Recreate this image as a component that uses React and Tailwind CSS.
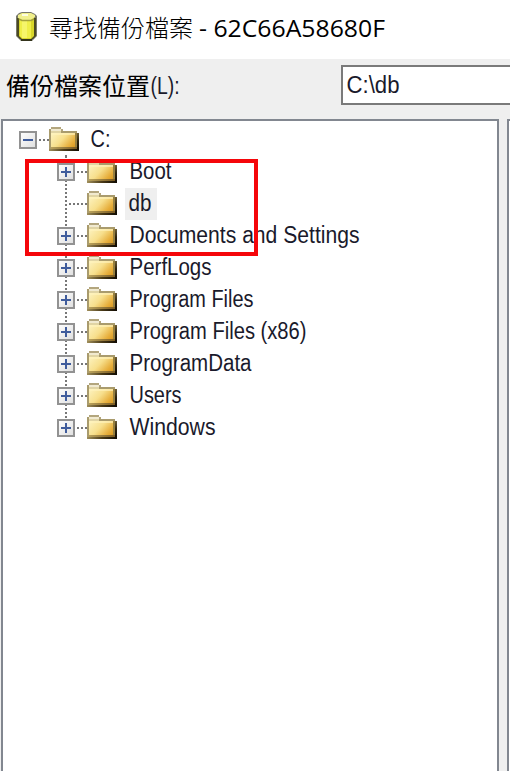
import React from "react";

const folders = [
  { name: "Boot", expandable: true, length: 42 },
  { name: "db", expandable: false, length: 23, selected: true },
  { name: "Documents and Settings", expandable: true, length: 230 },
  { name: "PerfLogs", expandable: true, length: 82 },
  { name: "Program Files", expandable: true, length: 124 },
  { name: "Program Files (x86)", expandable: true, length: 177 },
  { name: "ProgramData", expandable: true, length: 122 },
  { name: "Users", expandable: true, length: 52 },
  { name: "Windows", expandable: true, length: 86 },
];

function Label({ children, length }) {
  return (
    <svg width={length + 4} height="32" className="block shrink-0 overflow-visible">
      <text
        x="0.5"
        y="23"
        textLength={length}
        lengthAdjust="spacingAndGlyphs"
        className="fill-[#1a1a2b] font-['Liberation_Sans',Arial,sans-serif] text-[23.5px]"
      >
        {children}
      </text>
    </svg>
  );
}

function Database() {
  return (
    <svg width="24" height="32" viewBox="0 0 24 32" className="block">
      <path d="M5 2 8 1h9l4 2 2 2v20l-2 2-3 3H7l-3-3-2-2V5z" fill="#77776a" />
      <path d="M3 7h19v18l-3 3H6l-3-3z" fill="#4b4a20" />
      <path d="M5 6h15v19l-3 3H8l-3-3z" fill="#d8d62a" />
      <path d="M6 8h11v19H8l-2-2z" fill="#efee48" />
      <path d="M8 10h5v17H8z" fill="#f6f56a" />
      <path d="M4 4 8 2h9l4 2v2l-4 3H8L4 7z" fill="#f1f08c" />
      <path d="M8 3h6v2H8z" fill="#fdfde0" />
      <path d="M5 8l3 1.500h9L20 8" fill="none" stroke="#a5a33c" strokeWidth="1.500" />
      <path d="M7 28h11v2H7z" fill="#34341c" />
    </svg>
  );
}

function Folder() {
  return (
    <svg width="30" height="24" viewBox="0 0 30 24" className="block shrink-0" shapeRendering="crispEdges">
      <path d="M2 0h10v2H2z" fill="#b3a67e" />
      <path d="M0 2h2v20H0z" fill="#a99b6d" />
      <path d="M2 2h10v2H2z" fill="#f1ead0" />
      <path d="M12 2h2v2h-2z" fill="#b3a67e" />
      <path d="M2 4h10v2H2z" fill="#e0d4a4" />
      <path d="M12 4h16v2H12z" fill="#a99b6d" />
      <path d="M2 6h24v14H2z" fill="url(#folderFace)" />
      <path d="M2 6h24v2H2z" fill="#fff3bd" fillOpacity=".65" />
      <path d="M26 6h2v14h-2z" fill="#97803f" />
      <path d="M28 6h2v16h-2z" fill="url(#folderSide)" />
      <path d="M2 20h26v2H2z" fill="url(#folderEdge)" />
      <path d="M0 22h30v2H0z" fill="url(#folderBase)" />
    </svg>
  );
}

function Toggle({ x, plus }) {
  return (
    <g shapeRendering="crispEdges">
      <rect x={x + 1} y="8" width="16" height="16" fill="url(#toggleFace)" stroke="#929292" strokeWidth="2" />
      <path d={`M${x + 4} 15h10v2h-10z`} fill="#3f5c9c" />
      {plus && <path d={`M${x + 8} 11h2v10h-2z`} fill="#3f5c9c" />}
    </g>
  );
}

function Guide({ expandable, last }) {
  return (
    <svg width="84" height="32" className="block shrink-0">
      <g stroke="#777" strokeWidth="2" strokeDasharray="2 2" shapeRendering="crispEdges">
        <path d={last ? "M63 0V16" : "M63 0V32"} />
        <path d={expandable ? "M74 16H84" : "M66 16H84"} />
      </g>
      {expandable && <Toggle x={54} plus />}
    </svg>
  );
}

export default function App() {
  return (
    <main className="relative flex h-[771px] w-[510px] flex-col overflow-hidden bg-[#efefef]">
      <svg width="0" height="0" className="absolute">
        <defs>
          <linearGradient id="folderFace" gradientUnits="userSpaceOnUse" x1="5" y1="3" x2="25" y2="22">
            <stop offset="0" stopColor="#fdf3c0" />
            <stop offset=".45" stopColor="#f7df8c" />
            <stop offset=".8" stopColor="#e6ad3a" />
            <stop offset="1" stopColor="#d8961c" />
          </linearGradient>
          <linearGradient id="folderSide" x1="0" y1="0" x2="0" y2="1">
            <stop offset="0" stopColor="#6e5f38" />
            <stop offset=".5" stopColor="#2e240e" />
            <stop offset="1" stopColor="#100b03" />
          </linearGradient>
          <linearGradient id="folderEdge">
            <stop offset="0" stopColor="#b8a15c" />
            <stop offset="1" stopColor="#7a5a20" />
          </linearGradient>
          <linearGradient id="folderBase">
            <stop offset="0" stopColor="#a08f5c" />
            <stop offset=".5" stopColor="#4b3b18" />
            <stop offset="1" stopColor="#100b03" />
          </linearGradient>
          <linearGradient id="toggleFace" x1="0" y1="0" x2="1" y2="1">
            <stop offset="0" stopColor="#fff" />
            <stop offset="1" stopColor="#dedede" />
          </linearGradient>
        </defs>
      </svg>
      <header className="flex h-[59px] shrink-0 items-start bg-white pl-[14px] pt-[11px]">
        <Database />
        <h1 className="ml-[11px] flex h-[34px] items-center whitespace-pre text-[24px] leading-[34px] text-black">
          <span className="pb-[3px] font-['Noto_Sans_CJK_TC',sans-serif] font-light">尋找備份檔案</span>
          <svg width="200" height="34" className="block overflow-visible">
            <text x="6" y="26" textLength="186" lengthAdjust="spacingAndGlyphs" className="font-['Open_Sans',sans-serif] text-[24.5px]">- 62C66A58680F</text>
          </svg>
        </h1>
      </header>
      <div className="flex h-[60px] shrink-0 pt-[6px]">
        <label className="flex h-10 w-[341px] items-center pl-[6px] font-['Noto_Sans_CJK_TC',sans-serif] text-[24px] leading-10 text-black">
          <span>備份檔案位置</span>
          <div className="pt-1"><Label length={29}>(L):</Label></div>
        </label>
        <div className="flex h-10 flex-1 items-center border-2 border-r-0 border-[#7a7a7a] bg-white pl-[3px] pt-[2px]">
          <Label length={53}>C:\db</Label>
        </div>
      </div>
      <div className="flex min-h-0 flex-1 pl-px">
        <section className="w-[498px] border-2 border-b-0 border-[#828790] bg-white pt-[3px]">
          <div className="flex h-8">
            <svg width="46" height="32" className="block shrink-0">
              <path d="M36 16H46" stroke="#777" strokeWidth="2" strokeDasharray="2 2" shapeRendering="crispEdges" />
              <Toggle x={16} />
            </svg>
            <div className="flex w-[30px] shrink-0 flex-col pt-[3px]">
              <Folder />
              <svg width="30" height="5" className="block">
                <path d="M16 4h2v1h-2z" fill="#777" />
              </svg>
            </div>
            <div className="ml-[11px]"><Label length={20}>C:</Label></div>
          </div>
          {folders.map((folder, index) => (
            <div key={folder.name} className="flex h-8">
              <Guide expandable={folder.expandable} last={index === folders.length - 1} />
              <div className="pt-[3px]"><Folder /></div>
              <div className={folder.selected ? "ml-2 w-8 bg-[#efefef] pl-[3px]" : "ml-2 pl-1"}>
                <Label length={folder.length}>{folder.name}</Label>
              </div>
            </div>
          ))}
        </section>
        <section className="ml-2 w-[3px] border-l-2 border-t-2 border-[#828790] bg-white" />
      </div>
      <div className="pointer-events-none absolute left-[25px] top-[159px] h-[97px] w-[233px] border-4 border-[#f5060a]" />
    </main>
  );
}
